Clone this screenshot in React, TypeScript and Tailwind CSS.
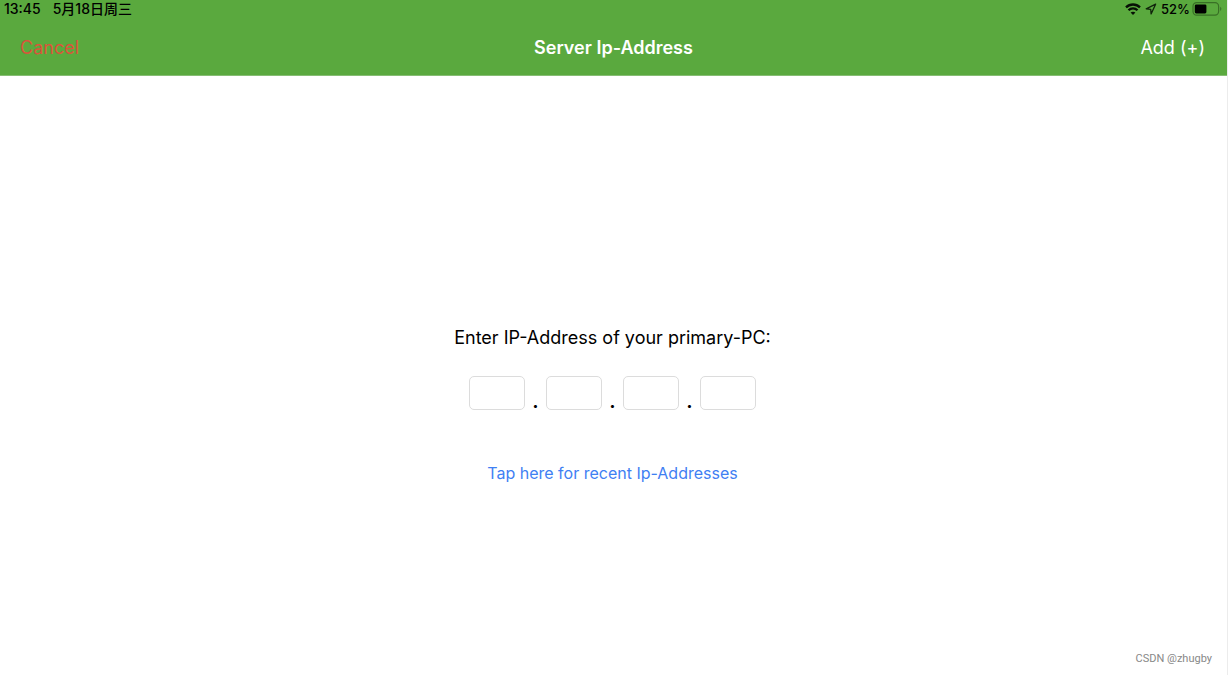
import { Fragment } from "react";

const octets = [1, 2, 3, 4];

function WifiIcon() {
  return (
    <svg aria-hidden="true" width="16" height="12" viewBox="0 0 16 12" fill="none" stroke="#071005" strokeWidth="2.3">
      <path d="M1 4.4C5 .5 11 .5 15 4.4" />
      <path d="M3.5 7.3c2.5-2.5 6.5-2.5 9 0" />
      <path d="M8 12 5.6 9.6c1.3-1.3 3.5-1.3 4.8 0Z" fill="#071005" stroke="none" />
    </svg>
  );
}

function LocationIcon() {
  return (
    <svg aria-hidden="true" width="12" height="12" viewBox="0 0 12 12" fill="none" stroke="#10240b" strokeWidth="1.3" strokeLinejoin="round">
      <path d="M10.6 1.2 1.2 5.8l4.5.5.4 4.6Z" />
    </svg>
  );
}

function BatteryIcon() {
  return (
    <svg aria-hidden="true" width="30" height="14" viewBox="0 0 30 14">
      <rect x="1" y=".6" width="25.6" height="12.6" rx="3.6" fill="none" stroke="#397026" strokeWidth="1.2" />
      <rect x="2.8" y="2.4" width="11.6" height="9" rx="1.4" fill="#000" />
      <path d="M28.2 4.8c1.6.8 1.6 3.4 0 4.2Z" fill="#397026" />
    </svg>
  );
}

export default function App() {
  return (
    <div className="flex min-h-screen flex-col border-r border-[#ececec] bg-white font-['Inter','Noto_Sans_CJK_SC',sans-serif] text-black">
      <header className="border-b border-[#86bd73] bg-[#5aa93e]">
        <div className="flex h-5 items-start justify-between pl-1 text-[13px] leading-[18px] font-medium">
          <div className="flex gap-3 text-sm leading-[18px]">
            <span>13:45</span>
            <span>5月18日周三</span>
          </div>
          <div className="flex h-[18px] items-center gap-1 pr-[5px]">
            <WifiIcon />
            <LocationIcon />
            <div className="flex items-center gap-0.5">
              <span>52%</span>
              <BatteryIcon />
            </div>
          </div>
        </div>
        <nav className="grid h-[55px] grid-cols-3 items-center px-5 pt-px text-lg">
          <button type="button" className="justify-self-start text-[#d9553a]">Cancel</button>
          <h1 className="justify-self-center font-semibold whitespace-nowrap text-white">Server Ip-Address</h1>
          <button type="button" className="justify-self-end pr-0.5 text-white">Add (+)</button>
        </nav>
      </header>
      <main className="flex flex-1 flex-col items-center justify-center pt-[90px] pr-0.5">
        <h2 id="ip-label" className="text-lg leading-7">Enter IP-Address of your primary-PC:</h2>
        <div role="group" aria-labelledby="ip-label" className="mt-6 flex">
          {octets.map((n) => (
            <Fragment key={n}>
              {n > 1 && <span className="flex w-[21px] items-end justify-center text-xl leading-[18px] font-semibold">.</span>}
              <input
                type="text"
                inputMode="numeric"
                maxLength={3}
                aria-label={`Octet ${n}`}
                className="h-[34px] w-14 rounded-[5px] border border-[#dcdcdc] bg-white text-center text-base outline-none"
              />
            </Fragment>
          ))}
        </div>
        <a href="#recent" className="mt-[51px] text-base leading-6 text-[#3f80f3]">Tap here for recent Ip-Addresses</a>
      </main>
      <footer className="flex h-8 items-center justify-end pr-[15px] font-['Roboto',sans-serif] text-[11px] text-[#888888]">
        CSDN @zhugby
      </footer>
    </div>
  );
}
